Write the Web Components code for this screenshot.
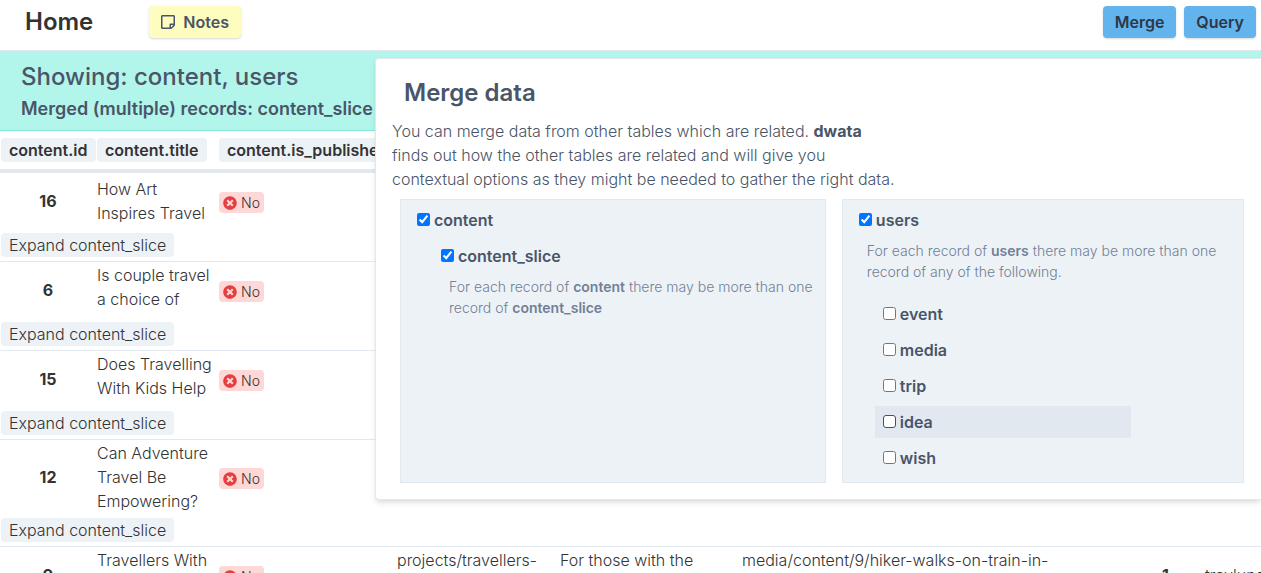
<!DOCTYPE html>
<html lang="en">
<head>
<meta charset="utf-8">
<title>Home</title>
<style>
  body {
    margin: 0;
    font: 350 16px/24px Inter, "Open Sans", sans-serif;
    color: #333;
    background: #fff;
    --gray-200: #edf2f7;
    --gray-300: #e2e8f0;
    --gray-600: #718096;
    --gray-700: #4a5568;
  }
</style>
</head>
<body>
<data-app></data-app>

<script>
const define = (name, markup, setup) => {
  const template = document.createElement('template');
  template.innerHTML = markup;
  customElements.define(name, class extends HTMLElement {
    connectedCallback() {
      if (this.shadowRoot) return;
      const root = this.attachShadow({ mode: 'open' });
      root.append(template.content.cloneNode(true));
      if (setup) setup(this, root);
    }
  });
};

define('action-button', `
  <style>
    :host { display: block; }
    button {
      display: flex; align-items: center; gap: 8px;
      height: 32px; padding: 0 12px; border: 0; border-radius: 4px;
      font: inherit; font-weight: 600; color: #2d3748; background: #63b3ed;
      box-shadow: 0 1px 3px rgba(0,0,0,.1), 0 1px 2px rgba(0,0,0,.06);
      cursor: pointer;
    }
    :host([kind="note"]) button { color: var(--gray-700); background: #fefcbf; }
  </style>
  <button type="button"><slot name="icon"></slot><slot></slot></button>`);

define('nav-bar', `
  <style>
    :host {
      display: flex; align-items: flex-start; gap: 8px;
      padding: 6px 5px 12px 25px;
      border-bottom: 1px solid var(--gray-300);
    }
    h1 { margin: 0 56px 0 0; font-size: 24px; line-height: 32px; font-weight: 600; }
    .left { flex: 1; display: flex; }
    svg { display: block; width: 14px; height: 16px; }
  </style>
  <div class="left">
    <h1>Home</h1>
    <action-button kind="note"><svg slot="icon" viewBox="0 0 448 512" fill="currentColor" aria-hidden="true"><path d="M448 348.106V80c0-26.51-21.49-48-48-48H48C21.49 32 0 53.49 0 80v351.988c0 26.51 21.49 48 48 48h268.118a48 48 0 0 0 33.941-14.059l83.882-83.882A48 48 0 0 0 448 348.106zm-128 80v-76.118h76.118L320 428.106zM400 80v223.988H296c-13.255 0-24 10.745-24 24v104H48V80h352z"/></svg>Notes</action-button>
  </div>
  <action-button>Merge</action-button>
  <action-button>Query</action-button>`);

define('result-banner', `
  <style>
    :host {
      display: block; padding: 8px 21px; white-space: nowrap;
      color: var(--gray-700); background: #b2f5ea; border-bottom: 1px solid #81e6d9;
    }
    h2, h3 { margin: 0; }
    h2 { font-size: 24px; line-height: 36px; font-weight: 500; }
    h3 { font-size: 18px; line-height: 27px; font-weight: 600; }
  </style>
  <h2><slot name="title"></slot></h2>
  <h3><slot></slot></h3>`);

define('status-badge', `
  <style>
    :host {
      display: inline-flex; align-items: center; gap: 4px;
      padding: 0 4px; border-radius: 4px; vertical-align: middle;
      font-size: 14px; line-height: 21px; background: #fed7d7;
    }
    svg { width: 14px; height: 14px; fill: #e53e3e; }
  </style>
  <svg viewBox="0 0 512 512" aria-hidden="true"><path d="M256 8C119 8 8 119 8 256s111 248 248 248 248-111 248-248S393 8 256 8zm121.6 313.1c4.7 4.7 4.7 12.3 0 17L338 377.6c-4.7 4.7-12.3 4.7-17 0L256 312l-65.1 65.6c-4.7 4.7-12.3 4.7-17 0L134.4 338c-4.7-4.7-4.7-12.3 0-17l65.6-65-65.6-65.1c-4.7-4.7-4.7-12.3 0-17l39.6-39.6c4.7-4.7 12.3-4.7 17 0l65 65.7 65.1-65.6c4.7-4.7 12.3-4.7 17 0l39.6 39.6c4.7 4.7 4.7 12.3 0 17L312 256l65.6 65.1z"/></svg><slot></slot>`);

define('expand-button', `
  <style>
    :host { display: block; }
    button {
      display: block; padding: 0 8px; border: 0; border-radius: 4px;
      font: inherit; color: inherit; background: var(--gray-200); cursor: pointer;
    }
  </style>
  <button type="button"><slot></slot></button>`);

const records = [
  { id: 16, title: ['How Art', 'Inspires Travel'], whole: true },
  { id: 6, title: ['Is couple travel', 'a choice of'] },
  { id: 15, title: ['Does Travelling', 'With Kids Help'] },
  { id: 12, title: ['Can Adventure', 'Travel Be', 'Empowering?'] },
  { id: 9, title: ['Travellers With'], path: 'projects/travellers-', summary: 'For those with the',
    media: 'media/content/9/hiker-walks-on-train-in-', user: 1, name: 'travlune' }
];

define('records-table', `
  <style>
    :host { display: block; overflow: hidden; }
    table { width: 1360px; table-layout: fixed; border-collapse: separate; border-spacing: 0; }
    th, td { padding: 1px; text-align: left; white-space: nowrap; vertical-align: top; }
    thead th { padding: 7px 1px; border-bottom: 4px solid var(--gray-300); font-weight: 600; }
    thead span { display: inline-block; padding: 0 8px; border-radius: 4px; background: var(--gray-200); }
    .record > * { height: 54px; }
    .id { text-align: center; font-weight: 700; }
    .id, .flag, .whole, .name { vertical-align: middle; }
    .more td { padding: 4px 1px; border-bottom: 1px solid var(--gray-300); }
    .c1 { width: 96px; } .c2 { width: 122px; } .c3 { width: 178px; } .c4 { width: 163px; }
    .c5 { width: 182px; } .c6 { width: 386px; } .c7 { width: 77px; }
  </style>
  <table>
    <colgroup><col class="c1"><col class="c2"><col class="c3"><col class="c4"><col class="c5"><col class="c6"><col class="c7"><col></colgroup>
    <thead><tr>
      <th><span>content.id</span></th><th><span>content.title</span></th><th><span>content.is_published</span></th>
      <th></th><th></th><th></th><th></th><th></th>
    </tr></thead>
    <tbody></tbody>
  </table>`, (host, root) => {
  root.querySelector('tbody').innerHTML = records.map(r => `
    <tr class="record">
      <td class="id">${r.id}</td>
      <td class="${r.whole ? 'whole' : ''}">${r.title.join('<br>')}</td>
      <td class="flag"><status-badge>No</status-badge></td>
      <td>${r.path || ''}</td><td>${r.summary || ''}</td><td>${r.media || ''}</td>
      <td class="id">${r.user || ''}</td><td class="name">${r.name || ''}</td>
    </tr>
    <tr class="more"><td colspan="8"><expand-button>Expand content_slice</expand-button></td></tr>`).join('');
});

define('check-row', `
  <style>
    :host { display: block; margin: 4px 0; }
    label {
      display: flex; align-items: center; gap: 4px; box-sizing: border-box;
      height: 32px; max-width: 256px; padding: 0 8px;
      font-weight: 600; color: var(--gray-700);
    }
    input { width: 13px; height: 13px; margin: 0 0 2px; }
    :host([active]) label { background: var(--gray-300); }
    :host([active]) input {
      appearance: none; box-sizing: border-box;
      border: 1px solid #4f4f4f; border-radius: 3px; background: #fff;
    }
  </style>
  <label><input type="checkbox"><slot></slot></label>`, (host, root) => {
  root.querySelector('input').checked = host.hasAttribute('checked');
});

define('merge-group', `
  <style>
    :host {
      display: block; padding: 0 8px 4px;
      border: 1px solid var(--gray-300); background: var(--gray-200);
    }
  </style>
  <slot></slot>`);

define('merge-panel', `
  <style>
    :host {
      display: block; padding: 16px 8px 16px 16px;
      color: var(--gray-700); background: #fff;
      border: 1px solid var(--gray-300); border-right: 0; border-radius: 4px 0 0 4px;
      box-shadow: 0 4px 6px -1px rgba(0,0,0,.1), 0 2px 4px -1px rgba(0,0,0,.06);
    }
    h2 { margin: 0 12px; font-size: 24px; line-height: 36px; font-weight: 600; }
    p { margin: 8px 0; white-space: nowrap; }
    b { font-weight: 700; }
    .groups { display: grid; grid-template-columns: 18fr 17fr; gap: 16px; margin: 0 9px 0 8px; }
    .children { margin-left: 24px; }
    .help {
      margin: 4px 0 16px 16px; white-space: nowrap;
      font-size: 14px; line-height: 21px; color: var(--gray-600);
    }
    .help b { font-weight: 600; }
  </style>
  <h2>Merge data</h2>
  <p>You can merge data from other tables which are related. <b>dwata</b><br>finds out how the other tables are related and will give you<br>contextual options as they might be needed to gather the right data.</p>
  <div class="groups">
    <merge-group>
      <check-row checked>content</check-row>
      <div class="children">
        <check-row checked>content_slice</check-row>
        <div class="help">For each record of <b>content</b> there may be more than one<br>record of <b>content_slice</b></div>
      </div>
    </merge-group>
    <merge-group>
      <check-row checked>users</check-row>
      <div class="help">For each record of <b>users</b> there may be more than one<br>record of any of the following.</div>
      <div class="children">
        <check-row>event</check-row>
        <check-row>media</check-row>
        <check-row>trip</check-row>
        <check-row active>idea</check-row>
        <check-row>wish</check-row>
      </div>
    </merge-group>
  </div>`);

define('data-app', `
  <style>
    :host { display: block; height: 100vh; overflow: hidden; }
    main { position: relative; }
    merge-panel { position: absolute; top: 7px; left: 375px; right: 0; }
  </style>
  <nav-bar></nav-bar>
  <main>
    <result-banner><span slot="title">Showing: content, users</span>Merged (multiple) records: content_slice</result-banner>
    <records-table></records-table>
    <merge-panel></merge-panel>
  </main>`);
</script>
</body>
</html>
